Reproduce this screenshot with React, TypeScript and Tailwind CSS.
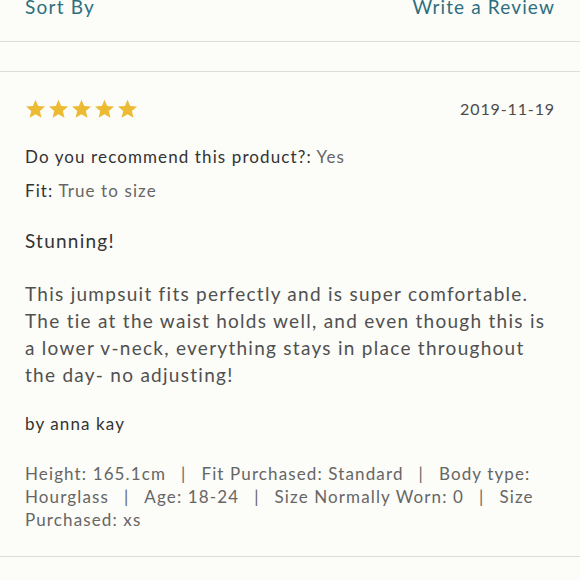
import React from "react";

const Star = () => (
  <svg width="21" height="20" viewBox="0 0 24 23" className="block">
    <path d="M12 0.8l3.1 7.3 7.9 0.6-6 5.2 1.9 7.7L12 17.4l-6.8 4.2 1.9-7.7-6-5.2 7.9-0.6z" fill="#ecba33" />
  </svg>
);

const Sep = () => <span className="mx-[15px] text-[#666]">|</span>;

export default function App() {
  const font = { fontFamily: "Lato, 'Noto Sans', sans-serif" };
  return (
    <div className="w-[580px] h-[580px] overflow-hidden bg-[#fcfcf8] text-[#3a3a3a]" style={font}>
      <div className="h-[42px] border-b border-[#dcdcd8] flex justify-between px-[25px]">
        <span className="text-[19px] leading-[19px] -mt-[3px] tracking-[0.065em] text-[#2c6f7f]">Sort By</span>
        <span className="text-[19px] leading-[19px] -mt-[3px] tracking-[0.06em] text-[#2c6f7f]">Write a Review</span>
      </div>
      <div className="h-[30px] border-b border-[#dcdcd8]" />
      <div className="pl-[25px] pr-[24px] pt-[26px] pb-[25px] border-b border-[#dcdcd8]">
        <div className="flex justify-between items-center h-[22px]">
          <div className="flex gap-[2px]">
            <Star /><Star /><Star /><Star /><Star />
          </div>
          <span className="text-[16px] tracking-[0.055em] text-[#4a4a4a] mr-[1px]">2019-11-19</span>
        </div>
        <div className="mt-[27px] text-[17px] leading-[20px] tracking-[0.065em]">
          <span className="text-[#333]">Do you recommend this product?: </span>
          <span className="text-[#666]">Yes</span>
        </div>
        <div className="mt-[14px] text-[17px] leading-[20px] tracking-[0.065em]">
          <span className="text-[#333]">Fit: </span>
          <span className="text-[#666]">True to size</span>
        </div>
        <div className="mt-[28px] text-[19px] leading-[24px] tracking-[0.065em] text-[#333]">Stunning!</div>
        <p className="mt-[27px] text-[19px] leading-[27px] tracking-[0.067em] text-[#505050]">
          This jumpsuit fits perfectly and is super comfortable. The tie at the waist holds well, and even though this is<br />a lower v-neck, everything stays in place throughout the day- no adjusting!
        </p>
        <div className="mt-[26px] text-[17px] leading-[20px] tracking-[0.065em] text-[#333]">by anna kay</div>
        <p className="mt-[28px] text-[17px] leading-[23px] tracking-[0.066em] text-[#666]">
          Height: 165.1cm<Sep />Fit Purchased: Standard<Sep />Body type: Hourglass<Sep />Age: 18-24<Sep />Size Normally Worn: 0<Sep />Size Purchased: xs
        </p>
      </div>
    </div>
  );
}
